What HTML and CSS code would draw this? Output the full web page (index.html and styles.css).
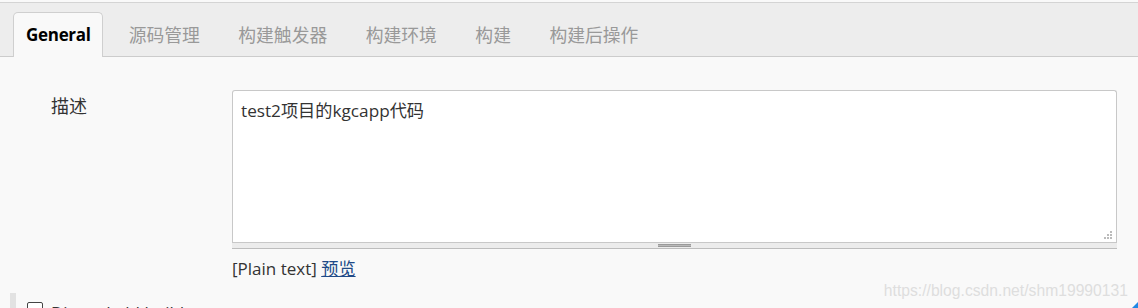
FILE: index.html
```html
<!DOCTYPE html>
<html lang="zh">
<head>
<meta charset="utf-8">
<title>General</title>
<link rel="stylesheet" href="styles.css">
</head>
<body>
<div class="page">
  <div class="tabbar">
    <div class="tab active">General</div>
    <div class="tab">源码管理</div>
    <div class="tab">构建触发器</div>
    <div class="tab">构建环境</div>
    <div class="tab">构建</div>
    <div class="tab">构建后操作</div>
  </div>
  <div class="content">
    <div class="row">
      <div class="label">描述</div>
      <div class="field">
        <div class="textarea">
          <span class="value">test2项目的kgcapp代码</span>
          <svg class="grip" width="8" height="8" viewBox="0 0 8 8">
            <rect x="6" y="0" width="2" height="2" fill="#bbb"/>
            <rect x="3" y="3" width="2" height="2" fill="#bbb"/>
            <rect x="6" y="3" width="2" height="2" fill="#bbb"/>
            <rect x="0" y="6" width="2" height="2" fill="#bbb"/>
            <rect x="3" y="6" width="2" height="2" fill="#bbb"/>
            <rect x="6" y="6" width="2" height="2" fill="#bbb"/>
          </svg>
        </div>
        <div class="resizer"><span class="handle"></span></div>
        <div class="format">[Plain text] <a href="#">预览</a></div>
      </div>
    </div>
    <div class="option">
      <span class="bar"></span>
      <span class="checkbox"></span>
      <span class="opt-text">Discard old builds</span>
    </div>
    <div class="watermark">https://blog.csdn.net/shm19990131</div>
    <span class="corner"></span>
  </div>
</div>
</body>
</html>
```
FILE: styles.css
```css
html, body {
  margin: 0;
  padding: 0;
  background: #f9f9f9;
  overflow: hidden;
}
body {
  font-family: "Open Sans", "Noto Sans CJK SC", sans-serif;
  color: #333;
  width: 1138px;
  height: 308px;
}
.page {
  position: relative;
  height: 308px;
  padding-top: 2px;
  box-sizing: border-box;
  overflow: hidden;
}
.tabbar {
  display: flex;
  align-items: flex-end;
  height: 53px;
  background: #ededed;
  border-top: 1px solid #d4d4d4;
  border-bottom: 1px solid #cccccc;
  padding-left: 13px;
  gap: 12.5px;
}
.tab {
  font-family: "Noto Sans CJK SC", sans-serif;
  font-size: 17.8px;
  color: #999;
  padding: 0 13px;
  height: 44px;
  line-height: 44px;
  box-sizing: border-box;
}
.tab.active {
  font-family: "Open Sans", sans-serif;
  font-weight: 700;
  font-size: 17px;
  color: #000;
  background: #f9f9f9;
  border: 1px solid #cfcfcf;
  border-bottom: none;
  border-radius: 5px 5px 0 0;
  margin-bottom: -1px;
  height: 45px;
  line-height: 43px;
  padding: 0 11.5px 0 12px;
  letter-spacing: -0.3px;
}
.content {
  position: relative;
  height: 251px;
}
.row {
  display: flex;
  padding-top: 33px;
}
.label {
  font-family: "Noto Sans CJK SC", sans-serif;
  font-size: 18px;
  width: 181px;
  padding-left: 51px;
  line-height: 28px;
  margin-top: 1px;
}
.field {
  width: 885px;
}
.textarea {
  position: relative;
  height: 152px;
  background: #fff;
  border: 1px solid #c8c8c8;
  border-radius: 3px 3px 0 0;
  border-bottom: none;
  box-sizing: border-box;
  padding: 6px 8px;
}
.value {
  font-size: 17.2px;
  line-height: 27px;
  color: #333;
}
.grip {
  position: absolute;
  right: 4px;
  bottom: 3px;
}
.resizer {
  height: 5px;
  background: #ececec;
  border-top: 1px solid #c8c8c8;
  border-bottom: 1px solid #bdbdbd;
  display: flex;
  justify-content: center;
  align-items: center;
}
.handle {
  width: 33px;
  height: 3px;
  border-top: 1px solid #9a9a9a;
  border-bottom: 1px solid #9a9a9a;
  background: #b9b9b9;
  box-sizing: border-box;
}
.format {
  margin-top: 8px;
  font-size: 17px;
  line-height: 22px;
  color: #333;
}
.format a {
  color: #204a87;
  text-decoration: underline;
  font-family: "Noto Sans CJK SC", sans-serif;
  font-size: 17.2px;
}
.option {
  display: flex;
  align-items: flex-start;
  margin-top: 13px;
  height: 20px;
}
.bar {
  width: 6px;
  height: 20px;
  background: #e2e2e2;
  margin-left: 10px;
}
.checkbox {
  width: 14px;
  height: 14px;
  border: 1px solid #444;
  border-radius: 2px;
  margin-left: 11px;
  margin-top: 9px;
  background: #fff;
}
.opt-text {
  margin-left: 8px;
  margin-top: 9px;
  font-size: 17px;
  line-height: 22px;
  color: #333;
}
.watermark {
  position: absolute;
  right: 10px;
  bottom: 8px;
  font-family: "Liberation Sans", Arial, sans-serif;
  font-size: 15.7px;
  color: #dedede;
}
.corner {
  position: absolute;
  right: 0;
  bottom: 0;
  width: 0;
  height: 0;
  border-left: 6px solid transparent;
  border-bottom: 6px solid #1e88e5;
}
```
